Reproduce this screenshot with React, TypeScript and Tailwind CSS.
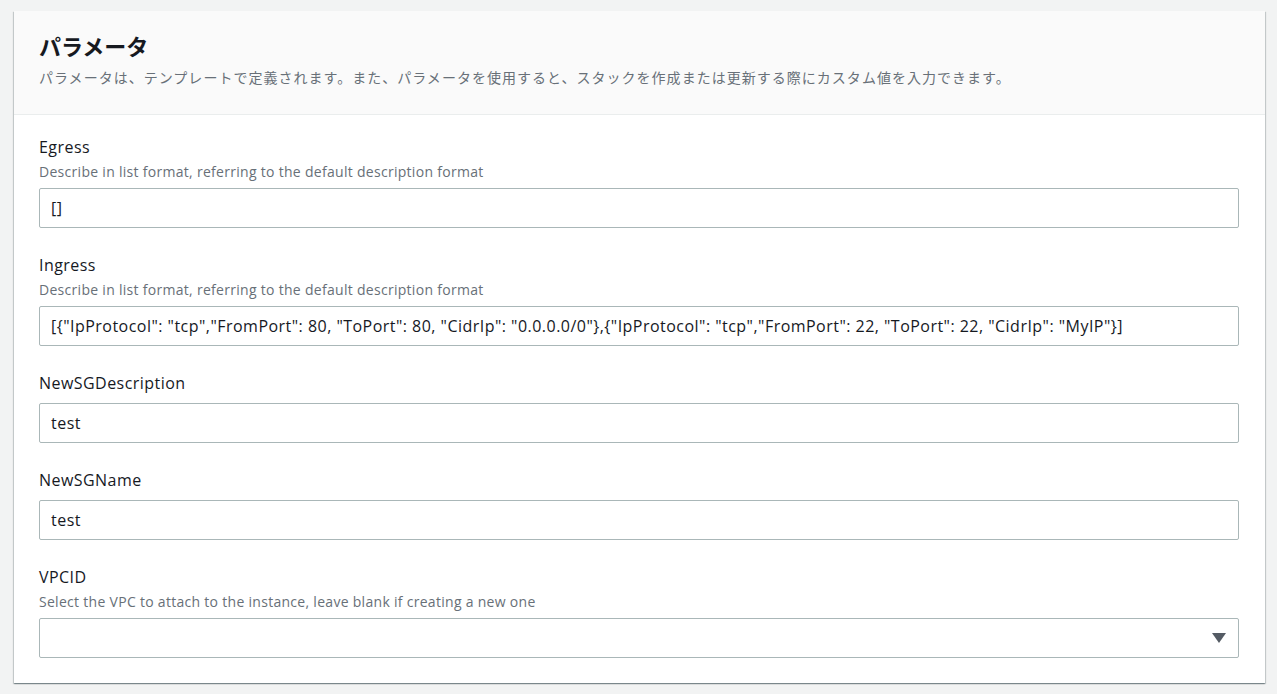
const ff = { fontFamily: '"Open Sans", "Noto Sans CJK JP", sans-serif' };

type Field = {
  label: string;
  description?: string;
  value?: string;
  select?: boolean;
};

const fields: Field[] = [
  {
    label: 'Egress',
    description: 'Describe in list format, referring to the default description format',
    value: '[]',
  },
  {
    label: 'Ingress',
    description: 'Describe in list format, referring to the default description format',
    value:
      '[{"IpProtocol": "tcp","FromPort": 80, "ToPort": 80, "CidrIp": "0.0.0.0/0"},{"IpProtocol": "tcp","FromPort": 22, "ToPort": 22, "CidrIp": "MyIP"}]',
  },
  { label: 'NewSGDescription', value: 'test' },
  { label: 'NewSGName', value: 'test' },
  {
    label: 'VPCID',
    description: 'Select the VPC to attach to the instance, leave blank if creating a new one',
    select: true,
  },
];

function FieldRow({ f }: { f: Field }) {
  return (
    <div className="flex flex-col">
      <div className="pt-[1px] text-[16px] leading-[21px] tracking-[0.45px] text-[#16191f]">{f.label}</div>
      {f.description && (
        <div className="mt-[4px] text-[14px] leading-[20px] tracking-[0.29px] text-[#687078]">
          {f.description}
        </div>
      )}
      <div
        className={`${f.description ? 'mt-[6px]' : 'mt-[9px]'} flex h-[40px] items-center rounded-[2px] border border-[#aab7b8] bg-white px-[11px]`}
      >
        <span className="flex-1 truncate text-[16px] tracking-[0.47px] text-[#16191f]">{f.value}</span>
        {f.select && (
          <svg width="14" height="10" viewBox="0 0 14 10" className="mr-[1px]">
            <path d="M0 0 H14 L7 10 Z" fill="#545b64" />
          </svg>
        )}
      </div>
    </div>
  );
}

export default function App() {
  return (
    <div className="min-h-[694px] bg-[#f2f3f3] pt-[11px] pl-[14px] pr-[12px]" style={ff}>
      <div className="bg-white shadow-[0_1px_1px_0_rgba(0,28,36,0.3),1px_1px_1px_0_rgba(0,28,36,0.15),-1px_1px_1px_0_rgba(0,28,36,0.15)]">
        <div className="border-b border-[#eaeded] bg-[#fafafa] pt-[21px] pb-[26px] pl-[25px] pr-[26px]">
          <h2 className="text-[22px] font-bold leading-[28px] text-[#16191f]">パラメータ</h2>
          <p className="mt-[8px] text-[14px] leading-[20px] tracking-[1.02px] text-[#687078]">
            パラメータは、テンプレートで定義されます。また、パラメータを使用すると、スタックを作成または更新する際にカスタム値を入力できます。
          </p>
        </div>
        <div className="flex flex-col gap-[26px] pt-[21px] pb-[25px] pl-[25px] pr-[26px]">
          {fields.map((f) => (
            <FieldRow key={f.label} f={f} />
          ))}
        </div>
      </div>
    </div>
  );
}
